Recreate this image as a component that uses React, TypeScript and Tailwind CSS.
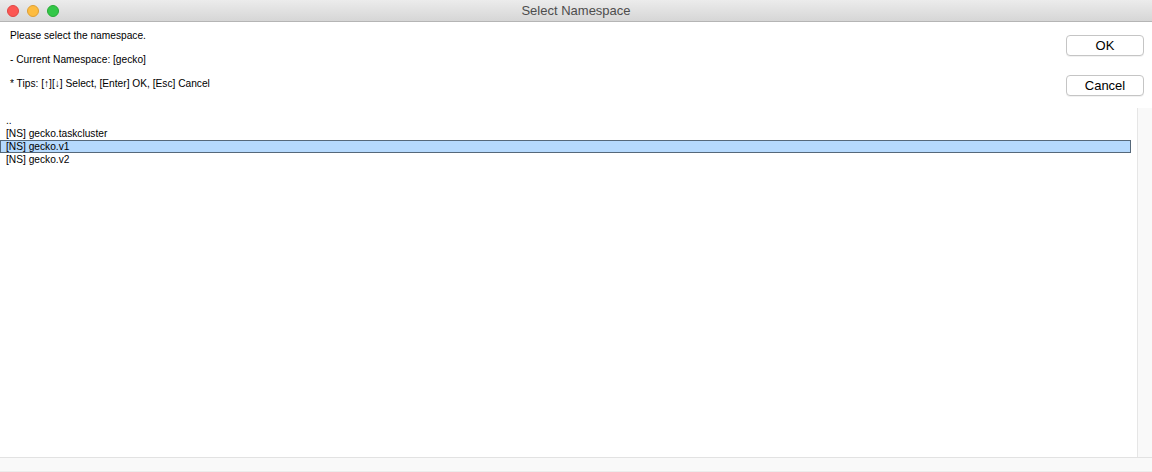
import React from "react";

const font = { fontFamily: '"Liberation Sans", Arial, sans-serif' };

export default function App() {
  const rows = ["..", "[NS] gecko.taskcluster", "[NS] gecko.v1", "[NS] gecko.v2"];
  return (
    <div className="w-[1152px] h-[472px] bg-white flex flex-col overflow-hidden" style={font}>
      {/* title bar */}
      <div className="h-[22px] shrink-0 flex items-center relative bg-gradient-to-b from-[#ececec] to-[#d6d6d6] border-b border-[#b5b5b5]">
        <div className="flex items-center gap-[8px] pl-[7px]">
          <div className="w-[12px] h-[12px] rounded-full bg-[#fc5753] border border-[#df4744]" />
          <div className="w-[12px] h-[12px] rounded-full bg-[#fdbc40] border border-[#de9f34]" />
          <div className="w-[12px] h-[12px] rounded-full bg-[#33c748] border border-[#27aa35]" />
        </div>
        <div className="absolute inset-0 flex items-center justify-center text-[13px] text-[#4d4d4d]">
          Select Namespace
        </div>
      </div>
      {/* header */}
      <div className="h-[86px] shrink-0 flex">
        <div className="flex-1 pl-[10px] pt-[7px] text-[10.2px] text-black flex flex-col gap-[10px] leading-[14px]">
          <div>Please select the namespace.</div>
          <div>- Current Namespace: [gecko]</div>
          <div>* Tips: [↑][↓] Select, [Enter] OK, [Esc] Cancel</div>
        </div>
        <div className="w-[86px] pt-[13px] flex flex-col gap-[19px]">
          <button className="w-[78px] h-[21px] rounded-[4px] border border-[#c5c5c5] bg-white text-[13px] text-black leading-none shadow-[0_1px_0_rgba(0,0,0,0.05)]">
            OK
          </button>
          <button className="w-[78px] h-[21px] rounded-[4px] border border-[#c5c5c5] bg-white text-[13px] text-black leading-none shadow-[0_1px_0_rgba(0,0,0,0.05)]">
            Cancel
          </button>
        </div>
      </div>
      {/* list */}
      <div className="flex-1 flex min-h-0">
        <div className="flex-1 pt-[6px] pr-[6px] text-[10.2px] text-black">
          {rows.map((r, i) => (
            <div
              key={r}
              className={
                i === 2
                  ? "h-[13px] leading-[12px] bg-[#b5d9fd] border border-[#55687a] pl-[5px]"
                  : "h-[13px] leading-[14px] pl-[6px]"
              }
            >
              {r}
            </div>
          ))}
        </div>
        <div className="w-[15px] bg-[#f9f9f9] border-l border-[#e6e6e6]" />
      </div>
      {/* bottom */}
      <div className="h-[15px] shrink-0 bg-[#f9f9f9] border-t border-[#e2e2e2] border-b border-b-[#ececec]" />
    </div>
  );
}
